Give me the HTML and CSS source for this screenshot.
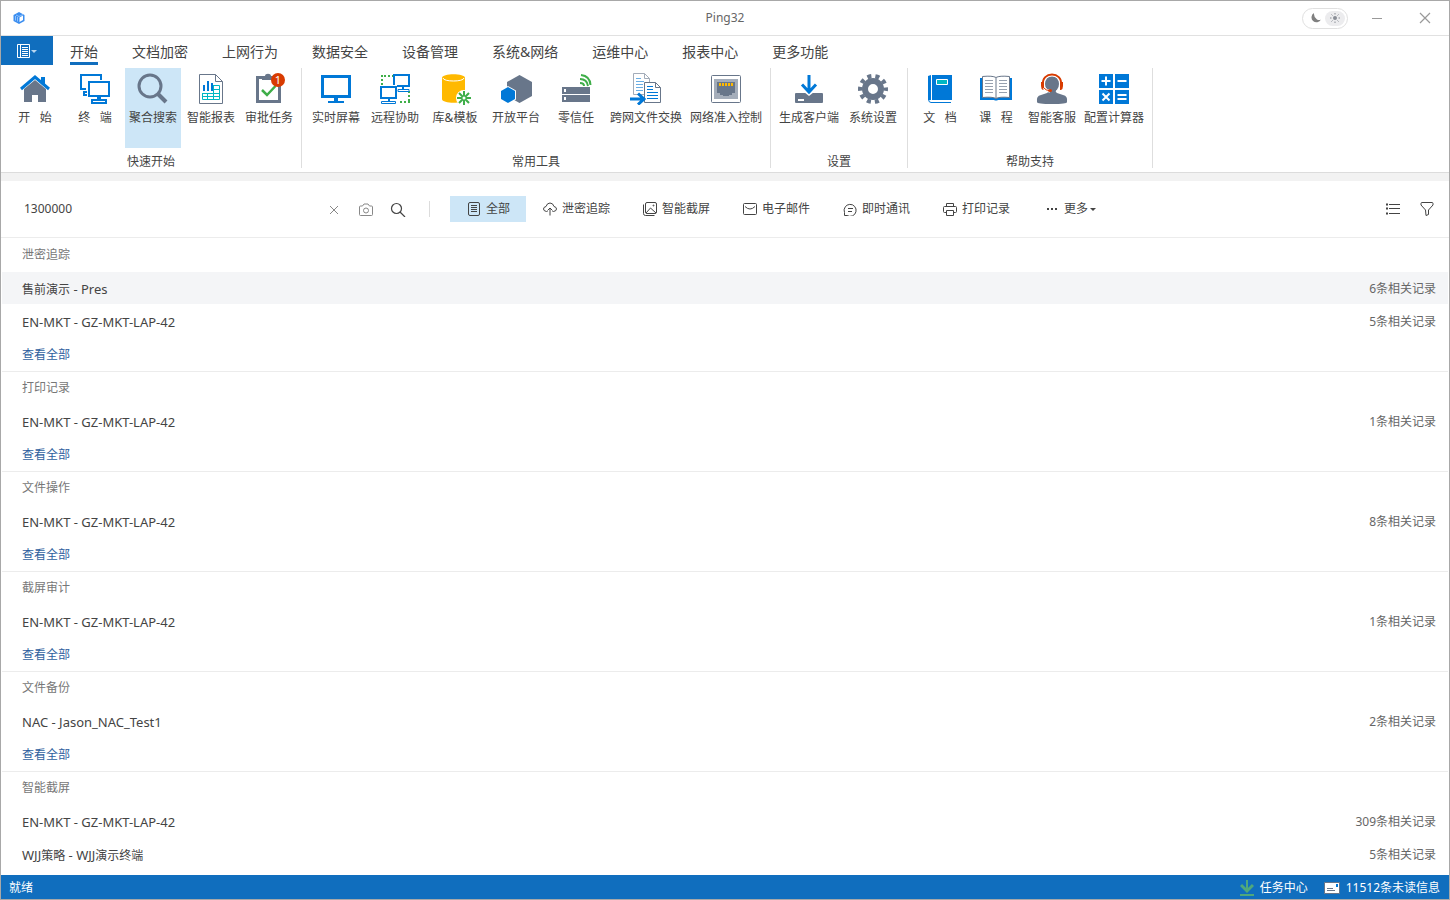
FILE: index.html
```
<!DOCTYPE html>
<html lang="zh-CN">
<head>
    <meta charset="UTF-8">
    <meta name="viewport" content="width=device-width, initial-scale=1.0">
    <title>Ping32</title>
    <link rel="stylesheet" href="styles.css">
</head>
<body>
    <div class="window">
        <header class="titlebar">
            <div class="title-left">
                <svg width="14" height="14" viewBox="0 0 14 14">
                    <path d="M7 1l5.500 3v6L7 13l-5.500-3V4z" fill="#3b8ef0"/>
                    <path d="M7.500 6.500l3.500-2v4.500l-3.500 2z" fill="#fff"/>
                    <path d="M3.500 5v4.500M5.500 6v4.500M4 4l3 1.500L11 3.500" fill="none" stroke="#b4d7ff" stroke-width=".7"/>
                </svg>
            </div>
            <div class="title-text">Ping32</div>
            <div class="title-right">
                <label class="theme-toggle">
                    <input type="checkbox" aria-label="切换主题" checked>
                    <svg width="12" height="12" viewBox="0 0 12 12"><path d="M4 1A5 5 0 1 0 11 7.500 4 4 0 0 1 7 7.500Q3.500 5 4 1z" fill="#808080"/></svg>
                    <span class="sun">
                        <svg width="12" height="12" viewBox="0 0 12 12">
                            <circle cx="6" cy="6" r="2" fill="#8a8e96"/>
                            <path d="M6 1v1.500M6 9.500V11M1 6h1.500M9.500 6H11M2.500 2.500l1 1M8.500 8.500l1 1M2.500 9.500l1-1M8.500 3.500l1-1" stroke="#8a8e96"/>
                        </svg>
                    </span>
                </label>
                <button type="button" class="win-btn" aria-label="最小化">
                    <svg width="12" height="12" viewBox="0 0 12 12"><path d="M1 6.500h10" stroke="#999"/></svg>
                </button>
                <button type="button" class="win-btn" aria-label="关闭">
                    <svg width="12" height="12" viewBox="0 0 12 12"><path d="M1 1l10 10M11 1L1 11" stroke="#999" stroke-width="1.200"/></svg>
                </button>
            </div>
        </header>

        <nav class="tabs">
            <button type="button" class="menu-btn" aria-label="菜单">
                <svg width="20" height="14" viewBox="0 0 20 14">
                    <path d="M.5.5h12v13H.5zM3.500.5v13M5 3.500h6M5 5.500h6M5 7.500h6M5 9.500h6M5 11.500h6" fill="none" stroke="#fff"/>
                    <path d="M14 6h6l-3 3z" fill="#b7d6f0"/>
                </svg>
            </button>
            <a href="#" class="tab active">开始</a>
            <a href="#" class="tab">文档加密</a>
            <a href="#" class="tab">上网行为</a>
            <a href="#" class="tab">数据安全</a>
            <a href="#" class="tab">设备管理</a>
            <a href="#" class="tab">系统&amp;网络</a>
            <a href="#" class="tab">运维中心</a>
            <a href="#" class="tab">报表中心</a>
            <a href="#" class="tab">更多功能</a>
        </nav>

        <div class="ribbon">
            <section class="group group-start">
                <div class="tools">
                    <button type="button" class="tool">
                        <svg class="icon" viewBox="0 0 32 32">
                            <path d="M5 16L16 7l11 9v13h-8v-7h-6v7H5z" fill="#68768a"/>
                            <path d="M22 4h4v8l-4-3.500z" fill="#0078d7"/>
                            <path d="M2 16L16 4l14 12" fill="none" stroke="#0078d7" stroke-width="3"/>
                        </svg>
                        <span>开&nbsp;&nbsp;&nbsp;始</span>
                    </button>
                    <button type="button" class="tool">
                        <svg class="icon" viewBox="0 0 32 32" fill="none" stroke="#0078d7" stroke-width="2">
                            <path d="M22 7V2H2v14h5M8 19H5v3h3"/>
                            <path d="M10 9h20v14H10zM13 27h14v3H13z"/>
                            <path d="M20 23v5" stroke-width="4"/>
                        </svg>
                        <span>终&nbsp;&nbsp;&nbsp;端</span>
                    </button>
                    <button type="button" class="tool selected">
                        <svg class="icon" viewBox="0 0 32 32" fill="none" stroke="#68768a">
                            <circle cx="13" cy="13" r="11" stroke-width="3"/>
                            <path d="M21 21l8 8" stroke-width="4"/>
                        </svg>
                        <span>聚合搜索</span>
                    </button>
                    <button type="button" class="tool">
                        <svg class="icon" viewBox="0 0 32 32" fill="none">
                            <path d="M4.500 1.500h16l7 7v22h-23z" stroke="#68768a"/>
                            <path d="M20.500 1.500v7h7" stroke="#68768a"/>
                            <path d="M18 12.500h6.500v14h-17v-6M7 20.500h17.500M18.500 12v14M12.500 21v5M18 16.500h6.500M7 23.500h17" stroke="#00b7c3"/>
                            <path d="M8 12h2v6H8zM12 8h2v10h-2zM16 10h2v8h-2z" fill="#0078d7"/>
                        </svg>
                        <span>智能报表</span>
                    </button>
                    <button type="button" class="tool">
                        <svg class="icon" viewBox="0 0 32 32" fill="none">
                            <path d="M10 4.500H4.500v24h22V12" stroke="#68768a" stroke-width="3"/>
                            <path d="M9 6V3h3c0-3 6-3 6 0h2v4H9z" fill="#68768a"/>
                            <path d="M9 17l5 5 8.500-9" stroke="#3fae49" stroke-width="2.500"/>
                        </svg>
                        <span class="badge">1</span>
                        <span>审批任务</span>
                    </button>
                </div>
                <h2>快速开始</h2>
            </section>

            <section class="group group-tools">
                <div class="tools">
                    <button type="button" class="tool">
                        <svg class="icon" viewBox="0 0 32 32" fill="none" stroke="#0078d7">
                            <path d="M2.500 3.500h27v20h-27z" stroke-width="3"/>
                            <path d="M16 24v5" stroke-width="4"/>
                            <path d="M8 29h16" stroke-width="2"/>
                        </svg>
                        <span>实时屏幕</span>
                    </button>
                    <button type="button" class="tool">
                        <svg class="icon" viewBox="0 0 32 32" fill="none" stroke="#0078d7" stroke-width="2">
                            <path d="M3 2v10M5 3h9M30 18v10M21 29h10" stroke="#3fae49" stroke-dasharray="2 2"/>
                            <path d="M15 12V2h15v11H18M24 13v4"/>
                            <path d="M19 16.500h11v2H19z" stroke-width="1"/>
                            <path d="M2 14h15v11H2zM10 25v3"/>
                            <path d="M2.500 28.500h14v2h-14z" stroke-width="1"/>
                        </svg>
                        <span>远程协助</span>
                    </button>
                    <button type="button" class="tool">
                        <svg class="icon" viewBox="0 0 32 32">
                            <path d="M3 5c0-5 23-5 23 0v21c0 5-23 5-23 0z" fill="#ffb900"/>
                            <path d="M4 5c0 4 21 4 21 0" fill="none" stroke="#fff"/>
                            <circle cx="25" cy="25" r="8" fill="#fff"/>
                            <path d="M25 18v14M18 25h14M20 20l10 10M30 20L20 30" stroke="#3fae49" stroke-width="2"/>
                            <circle cx="25" cy="25" r="1.500" fill="#fff"/>
                        </svg>
                        <span>库&amp;模板</span>
                    </button>
                    <button type="button" class="tool">
                        <svg class="icon" viewBox="0 0 32 32">
                            <path d="M19.500 2L32 9v14l-12.500 7L7 23V9z" fill="#68768a"/>
                            <path d="M8 13l8 4.500v9L8 31l-8-4.500v-9z" fill="#fff"/>
                            <path d="M8 14l7 4v8l-7 4-7-4v-8z" fill="#0078d7"/>
                        </svg>
                        <span>开放平台</span>
                    </button>
                    <button type="button" class="tool">
                        <svg class="icon" viewBox="0 0 32 32">
                            <path d="M2 14h28v7H2zM2 22h28v7H2z" fill="#68768a"/>
                            <path d="M4 16h2v3H4zM4 24h2v3H4z" fill="#fff"/>
                            <path d="M20 10q4 0 4 3M20 6q7 0 8 7M21 2q9 1 9.500 10" fill="none" stroke="#3fae49" stroke-width="2"/>
                        </svg>
                        <span>零信任</span>
                    </button>
                    <button type="button" class="tool">
                        <svg class="icon" viewBox="0 0 32 32" fill="none">
                            <path d="M14 21.500H3.500v-21h11l5 5V9M14.500.5v5h5" stroke="#a3acb9"/>
                            <path d="M6 5.500h5M6 8.500h8M6 11.500h7M6 14.500h7M6 17.500h7" stroke="#69aee5"/>
                            <path d="M14.500 9.500h11l5 5v15h-16zM25.500 9.500v5h5" fill="#fff" stroke="#68768a"/>
                            <path d="M17 13.500h6M17 16.500h6M17 19.500h11M17 22.500h11M17 25.500h11" stroke="#0078d7"/>
                            <path d="M0 26h13M8 20.500l6 5.500-6 5.500" stroke="#0078d7" stroke-width="3"/>
                        </svg>
                        <span>跨网文件交换</span>
                    </button>
                    <button type="button" class="tool">
                        <svg class="icon" viewBox="0 0 32 32">
                            <rect x="1.500" y="2.500" width="29" height="27" rx="1" fill="#fff" stroke="#68768a"/>
                            <rect x="4" y="6" width="24" height="20" fill="#a4adba"/>
                            <path d="M7 9h18v11h-3v2h-3v1h-6v-1h-3v-2H7z" fill="#68768a"/>
                            <path d="M9 10h2v3H9zM12 10h2v3h-2zM15 10h2v3h-2zM18 10h2v3h-2zM21 10h2v3h-2z" fill="#ffb900"/>
                        </svg>
                        <span>网络准入控制</span>
                    </button>
                </div>
                <h2>常用工具</h2>
            </section>

            <section class="group group-settings">
                <div class="tools">
                    <button type="button" class="tool">
                        <svg class="icon" viewBox="0 0 32 32">
                            <path d="M3 20h26q1 0 1 1v8q0 1-1 1H3q-1 0-1-1v-8q0-1 1-1z" fill="#68768a"/>
                            <path d="M11 19h10l-5 4z" fill="#fff"/>
                            <path d="M5 26h6v2H5z" fill="#fff"/>
                            <path d="M16 2v17M9 11.500l7 7.500 7-7.500" fill="none" stroke="#0078d7" stroke-width="3"/>
                        </svg>
                        <span>生成客户端</span>
                    </button>
                    <button type="button" class="tool">
                        <svg class="icon" viewBox="0 0 32 32" fill="none" stroke="#68768a">
                            <circle cx="16" cy="16" r="8" stroke-width="6"/>
                            <circle cx="16" cy="16" r="12.800" stroke-width="4.400" stroke-dasharray="4 4.040" stroke-dashoffset="2"/>
                        </svg>
                        <span>系统设置</span>
                    </button>
                </div>
                <h2>设置</h2>
            </section>

            <section class="group group-help">
                <div class="tools">
                    <button type="button" class="tool">
                        <svg class="icon" viewBox="0 0 32 32">
                            <path d="M8 2h20v25H8zM4 3l3-1v25H4z" fill="#0078d7"/>
                            <path d="M4.500 26q0 3.500 2.500 3.500h20" fill="none" stroke="#0078d7"/>
                            <path d="M12.500 6.500h11v5h-11z" fill="#00b7c3" stroke="#fff"/>
                        </svg>
                        <span>文&nbsp;&nbsp;&nbsp;档</span>
                    </button>
                    <button type="button" class="tool">
                        <svg class="icon" viewBox="0 0 32 32">
                            <path d="M0 5h32v22H18q-2 1-4 0H0z" fill="#0078d7"/>
                            <path d="M2.500 3.500q10-1 13.500 1 3.500-2 13.500-1v21q-10-1-13.500 1-3.500-2-13.500-1z" fill="#fff" stroke="#68768a"/>
                            <path d="M16 5v20" stroke="#68768a"/>
                            <path d="M5 7.500h8M5 10.500h8M5 13.500h8M5 16.500h8M5 19.500h8M19 7.500h8M19 10.500h8M19 13.500h8M19 16.500h8M19 19.500h8" stroke="#97a1af"/>
                        </svg>
                        <span>课&nbsp;&nbsp;&nbsp;程</span>
                    </button>
                    <button type="button" class="tool">
                        <svg class="icon" viewBox="0 0 32 32">
                            <path d="M1 29q-1-6 4-7l6-2q2-1 1-3h8q-1 2 1 3l6 2q5 1 4 7 0 2-15 2T1 29z" fill="#68768a"/>
                            <ellipse cx="16" cy="11" rx="7" ry="8" fill="#68768a"/>
                            <path d="M7 12C5-2 27-2 25 12" fill="none" stroke="#fff" stroke-width="4"/>
                            <path d="M7 12C5-2 27-2 25 12" fill="none" stroke="#d83b01" stroke-width="2"/>
                            <path d="M5 9h3v8H7q-2-1-2-4zM27 9h-3v8h1q2-1 2-4z" fill="#d83b01"/>
                            <path d="M8 15q2 3 6 3" fill="none" stroke="#fff" stroke-width="3"/>
                            <path d="M8 15q2 2.500 5 2.500" fill="none" stroke="#d83b01"/>
                            <ellipse cx="14" cy="17.500" rx="2" ry="1.500" fill="#d83b01"/>
                        </svg>
                        <span>智能客服</span>
                    </button>
                    <button type="button" class="tool">
                        <svg class="icon" viewBox="0 0 32 32">
                            <path d="M1 1h14v14H1zM17 1h14v14H17zM1 17h14v14H1zM17 17h14v14H17z" fill="#0078d7"/>
                            <path d="M8 3.500v9M3.500 8h9M19.500 8h9M4.500 20.500l7 7M11.500 20.500l-7 7M19.500 22h9M19.500 26h9" stroke="#fff" stroke-width="2"/>
                        </svg>
                        <span>配置计算器</span>
                    </button>
                </div>
                <h2>帮助支持</h2>
            </section>
        </div>

        <div class="searchbar">
            <form class="search-form">
                <input type="text" aria-label="搜索" value="1300000">
                <button type="button" aria-label="清除">
                    <svg width="16" height="16" viewBox="0 0 16 16"><path d="M4 5l8 8M12 5l-8 8" stroke="#888"/></svg>
                </button>
                <button type="button" aria-label="图片搜索">
                    <svg width="16" height="16" viewBox="0 0 16 16" fill="none" stroke="#888">
                        <path d="M2.500 5h2l1.500-2h4l1.500 2h2q1 0 1 1v7.500q0 1-1 1h-11q-1 0-1-1V6q0-1 1-1z"/>
                        <circle cx="8" cy="9.500" r="2.500"/>
                    </svg>
                </button>
                <button type="button" aria-label="搜索">
                    <svg width="16" height="16" viewBox="0 0 16 16" fill="none" stroke="#444" stroke-width="1.200"><circle cx="6.500" cy="7.500" r="5"/><path d="M10 11l5 5"/></svg>
                </button>
            </form>
            <div class="filters">
                <button type="button" class="filter active">
                    <svg width="14" height="14" viewBox="0 0 14 14"><rect x="1.500" y=".5" width="11" height="13" rx="1.500"/><path d="M4 3.500h6M4 5.500h6M4 7.500h6M4 9.500h6"/></svg>
                    全部
                </button>
                <button type="button" class="filter">
                    <svg width="14" height="14" viewBox="0 0 14 14"><path d="M4.500 9.500h-1Q.5 9 .5 7T3 4.500Q4 1 7 1t4 3.500Q13.500 5 13.500 7t-3 2.500h-1M7 13.500v-7M4.500 8.500L7 6l2.500 2.500"/></svg>
                    泄密追踪
                </button>
                <button type="button" class="filter">
                    <svg width="14" height="14" viewBox="0 0 14 14"><rect x="2.500" y=".5" width="11" height="11" rx="1.500"/><path d="M.5 2.500v9q0 2 2 2h9M3 11l4.500-5L13 11"/><circle cx="10.500" cy="3.500" r=".5"/></svg>
                    智能截屏
                </button>
                <button type="button" class="filter">
                    <svg width="14" height="14" viewBox="0 0 14 14"><rect x=".5" y="1.500" width="13" height="11" rx="1"/><path d="M2 4.500q5 5 10 0"/></svg>
                    电子邮件
                </button>
                <button type="button" class="filter">
                    <svg width="14" height="14" viewBox="0 0 14 14"><path d="M1.500 13.500v-3A6 6 0 1 1 4 13.500z"/><path d="M5 6.500h5M5 9.500h4"/></svg>
                    即时通讯
                </button>
                <button type="button" class="filter">
                    <svg width="14" height="14" viewBox="0 0 14 14"><path d="M3.500 4V1.500h7V4M3 10.500H1.500q-1 0-1-1V5.500q0-1 1-1h11q1 0 1 1v4q0 1-1 1H11M3.500 8.500h7v5h-7z"/></svg>
                    打印记录
                </button>
                <button type="button" class="filter filter-more">
                    <svg width="14" height="14" viewBox="0 0 14 14"><path d="M2 7h2M6 7h2M10 7h2" stroke-width="2"/></svg>
                    更多
                    <i class="caret"></i>
                </button>
            </div>
            <div class="view-actions">
                <button type="button" aria-label="列表视图">
                    <svg width="16" height="16" viewBox="0 0 16 16" stroke="#444"><path d="M4 3.500h11M4 7.500h11M4 12.500h11"/><path d="M1 3.500h2M1 7.500h2M1 12.500h2" stroke-width="2"/></svg>
                </button>
                <button type="button" aria-label="筛选">
                    <svg width="16" height="16" viewBox="0 0 16 16" fill="none" stroke="#444"><path d="M3 1.500h10q1 0 1 1v1.500L9.500 9v4.500L7 14.500 6.500 9 2 4V2.500q0-1 1-1z"/></svg>
                </button>
            </div>
        </div>

        <main class="results">
            <section class="result-group">
                <h3>泄密追踪</h3>
                <div class="row hover"><span>售前演示<span class="en"> - Pres</span></span><span class="count">6条相关记录</span></div>
                <div class="row"><span class="en">EN-MKT - GZ-MKT-LAP-42</span><span class="count">5条相关记录</span></div>
                <a href="#" class="more">查看全部</a>
            </section>
            <section class="result-group">
                <h3>打印记录</h3>
                <div class="row"><span class="en">EN-MKT - GZ-MKT-LAP-42</span><span class="count">1条相关记录</span></div>
                <a href="#" class="more">查看全部</a>
            </section>
            <section class="result-group">
                <h3>文件操作</h3>
                <div class="row"><span class="en">EN-MKT - GZ-MKT-LAP-42</span><span class="count">8条相关记录</span></div>
                <a href="#" class="more">查看全部</a>
            </section>
            <section class="result-group">
                <h3>截屏审计</h3>
                <div class="row"><span class="en">EN-MKT - GZ-MKT-LAP-42</span><span class="count">1条相关记录</span></div>
                <a href="#" class="more">查看全部</a>
            </section>
            <section class="result-group">
                <h3>文件备份</h3>
                <div class="row"><span class="en">NAC - Jason_NAC_Test1</span><span class="count">2条相关记录</span></div>
                <a href="#" class="more">查看全部</a>
            </section>
            <section class="result-group">
                <h3>智能截屏</h3>
                <div class="row"><span class="en">EN-MKT - GZ-MKT-LAP-42</span><span class="count">309条相关记录</span></div>
                <div class="row"><span><span class="en">WJJ</span>策略<span class="en"> - WJJ</span>演示终端</span><span class="count">5条相关记录</span></div>
            </section>
        </main>

        <footer class="statusbar">
            <span>就绪</span>
            <div class="status-right">
                <a href="#">
                    <svg width="14" height="16" viewBox="0 0 14 16" fill="none" stroke="#4fa87c" stroke-width="2"><path d="M7 0v11M0 15h14"/><path d="M1 5l6 6 6-6" stroke-width="3"/></svg>
                    任务中心
                </a>
                <a href="#">
                    <svg width="16" height="12" viewBox="0 0 16 12"><path d="M.5.5h15v11H.5z" fill="#fff" stroke="#68768a"/><path d="M12 2h2v3h-2z" fill="#0078d7"/><path d="M3 6.500h6M3 8.500h8" stroke="#68768a"/></svg>
                    11512条未读信息
                </a>
            </div>
        </footer>
    </div>
</body>
</html>
```

FILE: styles.css
```
* {
    box-sizing: border-box;
}
body {
    margin: 0;
    font-family: "Noto Sans", "Noto Sans CJK SC", sans-serif;
    font-size: 12px;
    line-height: 16px;
    color: #444;
    background-color: #fff;
}
button, input {
    font: inherit;
    color: inherit;
    border: none;
    background: none;
    padding: 0;
    margin: 0;
}
a {
    color: inherit;
    text-decoration: none;
}
svg {
    display: block;
    flex: none;
}
h2, h3 {
    margin: 0;
    font-size: 12px;
    font-weight: normal;
}
.window {
    height: 100vh;
    display: flex;
    flex-direction: column;
    border: 1px solid #a8a8a8;
}

/* title bar */
.titlebar {
    display: grid;
    grid-template-columns: 1fr auto 1fr;
    align-items: center;
    height: 35px;
    flex: none;
    border-bottom: 1px solid #e1e1e1;
    color: #666;
}
.title-left {
    padding-left: 11px;
}
.title-right {
    display: flex;
    justify-content: flex-end;
    align-items: center;
}
.theme-toggle {
    position: relative;
    display: flex;
    align-items: center;
    justify-content: space-between;
    width: 46px;
    height: 21px;
    margin-right: 5px;
    padding: 0 2px 0 7px;
    border: 1px solid #e0e0e0;
    border-radius: 11px;
}
.theme-toggle input {
    position: absolute;
    inset: 0;
    opacity: 0;
}
.sun {
    display: flex;
    align-items: center;
    justify-content: center;
    width: 20px;
    height: 15px;
    border-radius: 8px;
    background-color: #ececee;
}
.win-btn {
    display: flex;
    align-items: center;
    justify-content: center;
    width: 48px;
    height: 34px;
}

/* tabs */
.tabs {
    display: flex;
    height: 30px;
    flex: none;
    font-size: 14px;
}
.menu-btn {
    display: flex;
    align-items: center;
    justify-content: center;
    width: 52px;
    height: 29px;
    background-color: #106ebe;
}
.tab {
    height: 29px;
    margin: 0 17px;
    line-height: 32px;
    white-space: nowrap;
}
.tab.active {
    border-bottom: 3px solid #106ebe;
}

/* ribbon */
.ribbon {
    display: flex;
    height: 107px;
    flex: none;
    padding: 2px 0 4px;
    border-bottom: 1px solid #dcdcdc;
}
.group {
    display: flex;
    flex-direction: column;
    padding: 0 4px;
    border-right: 1px solid #dedede;
}
.group-start {
    padding: 0 3px;
}
.group h2 {
    line-height: 28px;
    height: 20px;
    text-align: center;
}
.tools {
    display: grid;
    height: 80px;
    flex: none;
}
.group-start .tools {
    grid-template-columns: 62px repeat(4, 58px);
}
.group-tools .tools {
    grid-template-columns: 60px 58px 62px 60px 60px 80px 80px;
}
.group-settings .tools {
    grid-template-columns: 68px 60px;
}
.group-help .tools {
    grid-template-columns: 56px 56px 56px 68px;
}
.tool {
    position: relative;
    display: flex;
    flex-direction: column;
    align-items: center;
    gap: 5px;
    margin: 0 1px;
    padding-top: 5px;
    white-space: nowrap;
}
.tool.selected {
    background-color: #cde6f7;
}
.icon {
    width: 32px;
    height: 32px;
}
.badge {
    position: absolute;
    top: 5px;
    right: 12px;
    width: 14px;
    height: 14px;
    border-radius: 50%;
    background-color: #d83b01;
    color: #fff;
    font-size: 11px;
    line-height: 14px;
    text-align: center;
}

/* search bar */
.searchbar {
    display: flex;
    align-items: center;
    height: 65px;
    flex: none;
    border-top: 8px solid #f2f2f2;
    border-bottom: 1px solid #ececec;
}
.search-form {
    display: flex;
    align-items: center;
    width: 429px;
    padding: 0 15px 0 23px;
    border-right: 1px solid #dcdcdc;
}
.search-form input {
    flex: 1;
    min-width: 0;
    outline: none;
}
.search-form button {
    display: flex;
    justify-content: center;
    width: 32px;
}
.filters {
    display: flex;
    margin-left: 20px;
}
.filter {
    display: flex;
    align-items: center;
    gap: 5px;
    height: 26px;
    padding: 0 16px 0 17px;
    white-space: nowrap;
}
.filter-more {
    padding-left: 19px;
}
.filter svg {
    fill: none;
    stroke: #444;
}
.filter.active {
    background-color: #cde6f7;
}
.caret {
    border: 3px solid transparent;
    border-top-color: #444;
    border-bottom: 0;
    margin-left: -3px;
}
.view-actions {
    display: flex;
    gap: 18px;
    margin-left: auto;
    padding-right: 14px;
}

/* results */
.results {
    flex: 1;
    min-height: 0;
    overflow: hidden;
    padding: 1px 1px 0;
}
.result-group {
    border-bottom: 1px solid #ececec;
}
.result-group:last-child {
    border-bottom: none;
}
.result-group h3 {
    height: 33px;
    padding-left: 20px;
    line-height: 32px;
    color: #777;
}
.row {
    display: flex;
    justify-content: space-between;
    height: 32px;
    margin-bottom: 1px;
    padding: 0 12px 0 20px;
    line-height: 34px;
}
.row.hover {
    background-color: #f4f5f7;
}
.en {
    font-size: 13px;
}
.count {
    color: #666;
}
.more {
    display: block;
    width: max-content;
    padding-left: 20px;
    line-height: 33px;
    color: #2f5f9e;
}

/* status bar */
.statusbar {
    display: flex;
    align-items: center;
    justify-content: space-between;
    height: 24px;
    flex: none;
    padding: 1px 9px 0 8px;
    background-color: #106ebe;
    color: #fff;
}
.status-right {
    display: flex;
    gap: 16px;
}
.status-right a {
    display: flex;
    align-items: center;
    gap: 6px;
}
```
